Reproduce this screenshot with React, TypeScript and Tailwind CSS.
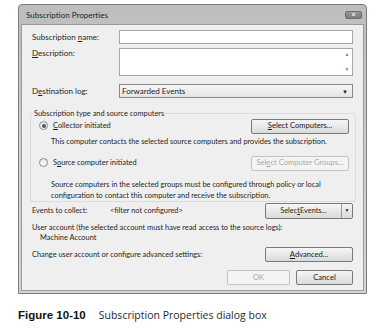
import React from 'react';

const ui = { fontFamily: 'Lato, "Noto Sans", sans-serif' };

const Btn = ({ children, disabled, className = '' }: { children: React.ReactNode; disabled?: boolean; className?: string }) => (
  <div
    className={`h-[15px] flex items-center justify-center whitespace-nowrap rounded-[2px] border text-[7.6px] ${
      disabled
        ? 'border-[#c4c4c4] bg-[#f4f4f4] text-[#a8a8a8]'
        : 'border-[#7a7a7a] bg-gradient-to-b from-[#f6f6f6] to-[#dadada] text-[#1a1a1a]'
    } ${className}`}
  >
    {children}
  </div>
);

const Radio = ({ checked }: { checked?: boolean }) => (
  <div className="w-[9px] h-[9px] rounded-full border border-[#8a8a8a] bg-gradient-to-b from-[#e8e8e8] to-[#fafafa] flex items-center justify-center">
    {checked && <div className="w-[4px] h-[4px] rounded-full bg-[#555]" />}
  </div>
);

export default function App() {
  return (
    <div className="w-[377px] h-[330px] bg-white overflow-hidden whitespace-nowrap" style={ui}>
      {/* Dialog window */}
      <div className="ml-[18px] mt-[4px] w-[349px] h-[290px] rounded-t-[4px] border border-[#7c7c7c] bg-gradient-to-b from-[#bdbdbd] via-[#cfcfcf] to-[#d4d4d4] flex flex-col">
        <div className="h-[19px] flex items-center justify-between pl-[7px] pr-[4px]">
          <span className="text-[8px] text-[#1e1e1e]">Subscription Properties</span>
          <div className="w-[17px] h-[8px] rounded-[2px] border border-[#6e6e6e] bg-gradient-to-b from-[#9a9a9a] to-[#7a7a7a] flex items-center justify-center text-[7px] leading-none text-white font-bold">
            ×
          </div>
        </div>
        <div className="mx-[2px] mb-[2px] flex-1 border border-[#9a9a9a] bg-[#efefef] px-[10px] pt-[5px] text-[8px] text-[#1e1e1e]">
          {/* name */}
          <div className="flex items-center h-[14px]">
            <div className="w-[87px]">
              Subscription <span className="underline">n</span>ame:
            </div>
            <div className="flex-1 h-full border border-[#a5a5a5] bg-white" />
          </div>
          {/* description */}
          <div className="flex mt-[4px] h-[28px]">
            <div className="w-[87px] -mt-[1px]">
              <span className="underline">D</span>escription:
            </div>
            <div className="flex-1 h-full border border-[#a5a5a5] bg-white flex justify-end">
              <div className="w-[10px] flex flex-col items-center justify-between py-[2px] text-[5px] text-[#888]">
                <span>▲</span>
                <span>▼</span>
              </div>
            </div>
          </div>
          {/* destination */}
          <div className="flex items-center mt-[8px] h-[14px]">
            <div className="w-[87px]">
              D<span className="underline">e</span>stination log:
            </div>
            <div className="flex-1 h-full border border-[#8a8a8a] bg-gradient-to-b from-[#f8f8f8] to-[#e4e4e4] flex items-center justify-between pl-[2px] pr-[4px]">
              <span>Forwarded Events</span>
              <span className="text-[6px]">▼</span>
            </div>
          </div>
          {/* group */}
          <div className="relative mt-[15px] -ml-[2px] w-[326px] h-[89px] border border-[#dcdcdc] rounded-[2px] pl-[8px] pr-[6px] pt-[5px] text-[7.4px]">
            <div className="absolute -top-[6px] left-[2px] bg-[#efefef] px-[1px] leading-[11px]">
              Subscription type and source computers
            </div>
            <div className="flex items-center justify-between h-[14px]">
              <div className="flex items-center gap-[5px]">
                <Radio checked />
                <span>
                  <span className="underline">C</span>ollector initiated
                </span>
              </div>
              <Btn className="w-[98px]">
                <span className="underline">S</span>elect Computers...
              </Btn>
            </div>
            <div className="pl-[12px] mt-[3px] leading-[11px]">
              This computer contacts the selected source computers and provides the subscription.
            </div>
            <div className="flex items-center justify-between h-[14px] mt-[9px]">
              <div className="flex items-center gap-[5px]">
                <Radio />
                <span>
                  S<span className="underline">o</span>urce computer initiated
                </span>
              </div>
              <Btn disabled className="w-[98px]">
                Sel<span className="underline">e</span>ct Computer Groups...
              </Btn>
            </div>
            <div className="pl-[12px] mt-[9px] leading-[11px]">
              Source computers in the selected groups must be configured through policy or local
              <br />
              configuration to contact this computer and receive the subscription.
            </div>
          </div>
          {/* events */}
          <div className="text-[7.4px]">
            <div className="flex items-center mt-[1px] h-[16px]">
              <div className="w-[78px]">Events to collect:</div>
              <div className="flex-1">&lt;filter not configured&gt;</div>
              <div className="w-[88px] h-[16px] flex rounded-[2px] border border-[#7a7a7a] bg-gradient-to-b from-[#f6f6f6] to-[#dadada]">
                <div className="flex-1 flex items-center justify-center border-r border-[#9a9a9a]">
                  Selec<span className="underline">t</span> Events...
                </div>
                <div className="w-[10px] flex items-center justify-center text-[5px]">▼</div>
              </div>
            </div>
            <div className="mt-[4px] leading-[10px]">User account (the selected account must have read access to the source logs):</div>
            <div className="pl-[8px] leading-[10px]">Machine Account</div>
            <div className="flex items-center justify-between mt-[4px] h-[15px]">
              <span>Change user account or configure advanced settings:</span>
              <Btn className="w-[88px]">
                <span className="underline">A</span>dvanced...
              </Btn>
            </div>
            <div className="flex justify-end gap-[6px] mt-[8px]">
              <Btn disabled className="w-[63px]">
                OK
              </Btn>
              <Btn className="w-[57px]">Cancel</Btn>
            </div>
          </div>
        </div>
      </div>
      {/* caption */}
      <div className="mt-[13px] ml-[18px] flex items-baseline gap-[13px]">
        <span className="font-bold text-[11.5px] text-[#111]" style={{ fontFamily: '"Liberation Sans", Arial, sans-serif' }}>
          Figure 10-10
        </span>
        <span className="text-[10.5px] text-[#2a2a2a]" style={{ fontFamily: '"Open Sans", sans-serif' }}>
          Subscription Properties dialog box
        </span>
      </div>
    </div>
  );
}
